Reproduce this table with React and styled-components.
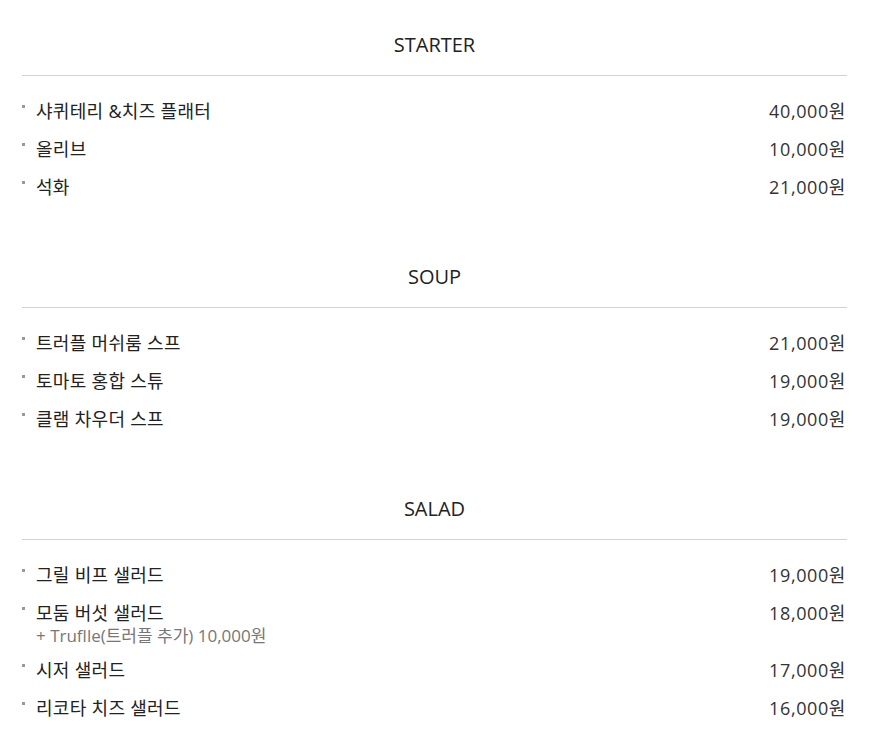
import React from "react";
import styled, { createGlobalStyle } from "styled-components";

const GlobalStyle = createGlobalStyle`
  body {
    margin: 0;
    background: #fff;
    font-family: "Open Sans", "Noto Sans CJK KR", sans-serif;
    color: #222;
  }
`;

const StyledMenu = styled.div`
  padding: 0 25px 0 22px;
`;

const StyledSection = styled.section`
  padding-top: 30px;
  padding-bottom: 26px;
`;

const StyledTitle = styled.h2`
  margin: 0;
  padding-bottom: 15px;
  border-bottom: 1px solid #d2d2d2;
  font-size: 20px;
  font-weight: 400;
  line-height: 30px;
  text-align: center;
  color: #222;
`;

const StyledList = styled.ul`
  list-style: none;
  margin: 0;
  padding: 16px 0 0;
`;

const StyledItem = styled.li`
  position: relative;
  display: flex;
  justify-content: space-between;
  align-items: flex-start;
  padding: 0 1px 0 14px;
  min-height: 38px;
  line-height: 38px;
  font-size: 18px;
  letter-spacing: 0.3px;

  &::before {
    content: "";
    position: absolute;
    left: 0;
    top: 13px;
    width: 3px;
    height: 3px;
    background: #999;
  }
`;

const StyledName = styled.div`
  display: flex;
  flex-direction: column;
`;

const StyledExtra = styled.span`
  margin-top: -6px;
  padding-bottom: 6px;
  font-size: 17px;
  line-height: 19px;
  letter-spacing: 0;
  color: #777;
`;

const StyledPrice = styled.span`
  letter-spacing: 0.6px;
  color: #333;
`;

const menu = [
  {
    title: "STARTER",
    items: [
      { name: "샤퀴테리 &치즈 플래터", price: "40,000원" },
      { name: "올리브", price: "10,000원" },
      { name: "석화", price: "21,000원" },
    ],
  },
  {
    title: "SOUP",
    items: [
      { name: "트러플 머쉬룸 스프", price: "21,000원" },
      { name: "토마토 홍합 스튜", price: "19,000원" },
      { name: "클램 차우더 스프", price: "19,000원" },
    ],
  },
  {
    title: "SALAD",
    items: [
      { name: "그릴 비프 샐러드", price: "19,000원" },
      {
        name: "모둠 버섯 샐러드",
        extra: "+ Truflle(트러플 추가) 10,000원",
        price: "18,000원",
      },
      { name: "시저 샐러드", price: "17,000원" },
      { name: "리코타 치즈 샐러드", price: "16,000원" },
    ],
  },
];

const App = () => (
  <StyledMenu>
    <GlobalStyle />
    {menu.map((section) => (
      <StyledSection key={section.title}>
        <StyledTitle>{section.title}</StyledTitle>
        <StyledList>
          {section.items.map((item) => (
            <StyledItem key={item.name}>
              <StyledName>
                <span>{item.name}</span>
                {item.extra && <StyledExtra>{item.extra}</StyledExtra>}
              </StyledName>
              <StyledPrice>{item.price}</StyledPrice>
            </StyledItem>
          ))}
        </StyledList>
      </StyledSection>
    ))}
  </StyledMenu>
);

export default App;
